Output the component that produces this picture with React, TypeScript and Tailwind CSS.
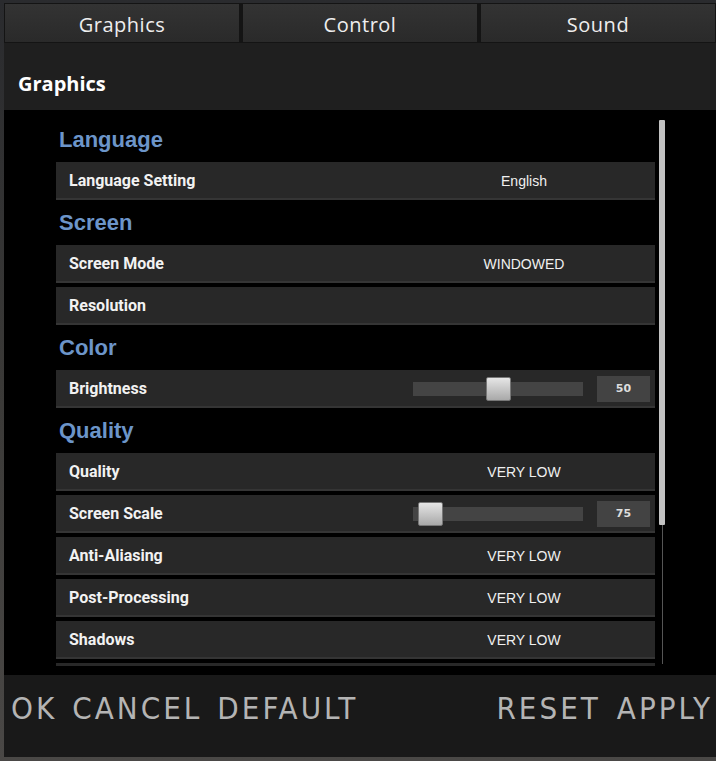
import React from "react";

type Row =
  | { kind: "header"; label: string }
  | { kind: "value"; label: string; value?: string }
  | { kind: "slider"; label: string; value: string; knob: string };

const rows: Row[] = [
  { kind: "header", label: "Language" },
  { kind: "value", label: "Language Setting", value: "English" },
  { kind: "header", label: "Screen" },
  { kind: "value", label: "Screen Mode", value: "WINDOWED" },
  { kind: "value", label: "Resolution" },
  { kind: "header", label: "Color" },
  { kind: "slider", label: "Brightness", value: "50", knob: "left-[73px]" },
  { kind: "header", label: "Quality" },
  { kind: "value", label: "Quality", value: "VERY LOW" },
  { kind: "slider", label: "Screen Scale", value: "75", knob: "left-[5px]" },
  { kind: "value", label: "Anti-Aliasing", value: "VERY LOW" },
  { kind: "value", label: "Post-Processing", value: "VERY LOW" },
  { kind: "value", label: "Shadows", value: "VERY LOW" },
  // next row only peeks in under the fold
  { kind: "value", label: "" },
];

function Tab({ label }: { label: string }) {
  return (
    <div className="flex items-center justify-center pt-[3px] bg-gradient-to-b from-[#333] to-[#2a2a2a] border border-[#141414] text-[20px] text-[#eee] font-['Open_Sans',sans-serif] tracking-[0.5px]">
      {label}
    </div>
  );
}

function SettingRow({ row }: { row: Row }) {
  if (row.kind === "header") {
    return (
      <div className="h-[41px] flex items-center pl-[3px] pb-[4px] text-[22px] font-bold text-[#6c95c9] font-['Liberation_Sans',sans-serif]">
        {row.label}
      </div>
    );
  }
  return (
    <div className="h-[38px] mb-[4px] flex items-center pt-[2px] bg-[#282828] border-b-2 border-[#353535]">
      <span className="flex-1 pl-[13px] text-[16px] font-bold text-[#f2f2f2] font-['Roboto',sans-serif]">
        {row.label}
      </span>
      {row.kind === "value" ? (
        <span className="w-[262px] text-center text-[14px] text-[#f0f0f0] font-['Liberation_Sans',sans-serif]">
          {row.value}
        </span>
      ) : (
        <div className="flex items-center gap-[14px] mr-[5px]">
          <div className="relative w-[170px] h-[14px] bg-[#444]">
            <div className={`absolute ${row.knob} top-[-5px] w-[25px] h-[24px] rounded-[2px] border border-[#777] bg-gradient-to-b from-[#e6e6e6] to-[#a9a9a9]`} />
          </div>
          <div className="w-[53px] h-[26px] flex items-center justify-center bg-[#434343] text-[11px] font-bold text-[#ddd] font-['DejaVu_Sans',sans-serif]">
            {row.value}
          </div>
        </div>
      )}
    </div>
  );
}

export default function App() {
  return (
    <div className="w-[716px] h-[761px] bg-gradient-to-b from-[#2a2b2e] via-[#3a3937] to-[#4a4846] pt-[3px] pl-[4px] pb-[4px] flex flex-col overflow-hidden">
      <div className="grid grid-cols-3 gap-[2px] h-[40px] bg-[#141414]">
        <Tab label="Graphics" />
        <Tab label="Control" />
        <Tab label="Sound" />
      </div>

      <div className="h-[67px] bg-[#1f1f1f] flex items-center pl-[14px] pt-[14px] text-[20px] font-bold text-white font-['Open_Sans',sans-serif]">
        Graphics
      </div>

      <div className="h-[565px] bg-black flex pl-[52px]">
        <div className="w-[599px] h-[556px] overflow-hidden pt-[11px]">
          {rows.map((r, i) => (
            <SettingRow key={i} row={r} />
          ))}
        </div>
        <div className="ml-[4px] w-[6px] pt-[10px] flex flex-col items-center">
          <div className="w-[6px] h-[405px] bg-[#c2c2c2] rounded-[1px]" />
          <div className="w-px h-[139px] bg-[#555]" />
        </div>
      </div>

      <div className="h-[82px] bg-[#191919] flex items-center justify-between pl-[7px] pr-[3px] pb-[16px] text-[31px] text-[#b4b4b4] tracking-[3px] font-['DejaVu_Sans',sans-serif] [font-stretch:condensed]">
        <span className="flex gap-[15px]">
          <span>OK</span>
          <span>CANCEL</span>
          <span>DEFAULT</span>
        </span>
        <span className="flex gap-[16px]">
          <span>RESET</span>
          <span>APPLY</span>
        </span>
      </div>
    </div>
  );
}
